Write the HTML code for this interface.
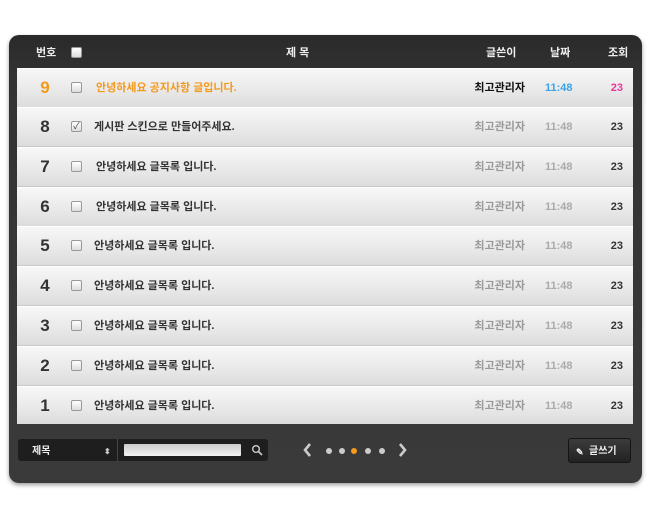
<!DOCTYPE html>
<html><head><meta charset="utf-8"><style>
*{margin:0;padding:0;box-sizing:border-box}
body{width:650px;height:507px;background:#fff;font-family:"Liberation Sans","Noto Sans CJK KR",sans-serif;position:relative;overflow:hidden}
.panel{position:absolute;left:9px;top:35px;width:633px;height:448px;border-radius:10px;background:linear-gradient(#2a2a2a,#333 10%,#3a3a3a);box-shadow:0 2px 4px rgba(0,0,0,.4)}
.hd{position:absolute;top:0;left:0;right:0;height:33px;color:#eee;font-size:11px;font-weight:bold}
.hd span{position:absolute;top:2px;height:33px;line-height:33px}
.cb{position:absolute;width:11px;height:11px;border:1px solid #999;border-radius:2px;background:linear-gradient(#fff,#ddd)}
.list{position:absolute;left:8px;top:33px;width:616px;height:356px;background:#ddd}
.row{position:absolute;left:0;width:616px;height:40px;background:linear-gradient(#f7f7f7,#e8e8e8 60%,#dcdcdc);border-bottom:1px solid #c8c8c8;border-top:1px solid #fff}
.row div{line-height:38px;top:0;height:38px}
.row .n{position:absolute;left:16px;width:24px;text-align:center;font-size:17px;font-weight:bold;color:#333}
.row .cb{left:54px;top:13px;height:11px;line-height:9px}
.row .t{position:absolute;left:79px;font-size:11px;font-weight:bold;color:#333}
.row .a{position:absolute;right:108px;font-size:11px;color:#999;font-weight:bold}
.row .d{position:absolute;left:528px;font-size:11px;color:#aaa;font-weight:bold}
.row .c{position:absolute;right:10px;font-size:11px;color:#333;font-weight:bold}
.sel{position:absolute;left:9px;top:404px;width:99px;height:22px;line-height:25px;background:#1e1e1e;border-radius:3px 0 0 3px;color:#eee;font-size:10px;font-weight:bold;padding-left:14px}
.sel2{position:absolute;left:108px;top:404px;width:151px;height:22px;background:#1e1e1e;border-left:1px solid #444;border-radius:0 3px 3px 0}
.inp{position:absolute;left:6px;top:5px;width:117px;height:12px;background:linear-gradient(#ccc,#f2f2f2);border-radius:1px}
.btn{position:absolute;left:559px;top:403px;width:63px;height:25px;line-height:26px;background:linear-gradient(#3c3c3c,#222);border-radius:3px;border:1px solid #151515;color:#eee;font-size:10px;font-weight:bold;padding-left:20px}
.dot{position:absolute;top:413px;width:6px;height:6px;border-radius:50%;background:#ccc}
</style></head><body>
<div class="panel">
 <div class="hd">
  <span style="left:27px">번호</span><div class="cb" style="left:62px;top:12px"></div>
  <span style="left:277px">제 목</span>
  <span style="left:477px">글쓴이</span>
  <span style="left:541px">날짜</span>
  <span style="left:599px">조회</span>
 </div>
 <div class="list">
  <div class="row" style="top:0"><div class="n" style="color:#f39a1e">9</div><div class="cb"></div><div class="t" style="color:#f39a1e">안녕하세요 공지사항 글입니다.</div><div class="a" style="color:#111">최고관리자</div><div class="d" style="color:#3aa3e8">11:48</div><div class="c" style="color:#e8399a">23</div></div>
  <div class="row" style="top:39px"><div class="n">8</div><div class="cb" style="font-size:9px;text-align:center;color:#444">✓</div><div class="t" style="left:77px">게시판 스킨으로 만들어주세요.</div><div class="a">최고관리자</div><div class="d">11:48</div><div class="c">23</div></div>
  <div class="row" style="top:79px"><div class="n">7</div><div class="cb"></div><div class="t">안녕하세요 글목록 입니다.</div><div class="a">최고관리자</div><div class="d">11:48</div><div class="c">23</div></div>
  <div class="row" style="top:119px"><div class="n">6</div><div class="cb"></div><div class="t">안녕하세요 글목록 입니다.</div><div class="a">최고관리자</div><div class="d">11:48</div><div class="c">23</div></div>
  <div class="row" style="top:158px"><div class="n">5</div><div class="cb"></div><div class="t" style="left:77px">안녕하세요 글목록 입니다.</div><div class="a">최고관리자</div><div class="d">11:48</div><div class="c">23</div></div>
  <div class="row" style="top:198px"><div class="n">4</div><div class="cb"></div><div class="t" style="left:77px">안녕하세요 글목록 입니다.</div><div class="a">최고관리자</div><div class="d">11:48</div><div class="c">23</div></div>
  <div class="row" style="top:238px"><div class="n">3</div><div class="cb"></div><div class="t" style="left:77px">안녕하세요 글목록 입니다.</div><div class="a">최고관리자</div><div class="d">11:48</div><div class="c">23</div></div>
  <div class="row" style="top:278px"><div class="n">2</div><div class="cb"></div><div class="t" style="left:77px">안녕하세요 글목록 입니다.</div><div class="a">최고관리자</div><div class="d">11:48</div><div class="c">23</div></div>
  <div class="row" style="top:318px;height:38px;border-bottom:none"><div class="n">1</div><div class="cb"></div><div class="t" style="left:77px">안녕하세요 글목록 입니다.</div><div class="a">최고관리자</div><div class="d">11:48</div><div class="c">23</div></div>
 </div>
 <div class="sel">제목<span style="position:absolute;left:86px;top:0;font-size:8px;color:#ccc">⬍</span></div>
 <div class="sel2"><div class="inp"></div>
  <svg style="position:absolute;left:133px;top:5px" width="12" height="12" viewBox="0 0 12 12"><circle cx="5" cy="5" r="3.3" fill="none" stroke="#ccc" stroke-width="1.4"/><path d="M7.5 7.5L11 11" stroke="#ccc" stroke-width="1.6"/></svg>
 </div>
 <svg style="position:absolute;left:293px;top:408px" width="10" height="14" viewBox="0 0 10 14"><path d="M8 1L3 7L8 13" fill="none" stroke="#ccc" stroke-width="2.6"/></svg>
 <div class="dot" style="left:317px"></div><div class="dot" style="left:330px"></div><div class="dot" style="left:342px;background:#f39a1e"></div><div class="dot" style="left:356px"></div><div class="dot" style="left:370px"></div>
 <svg style="position:absolute;left:389px;top:408px" width="10" height="14" viewBox="0 0 10 14"><path d="M2 1L7 7L2 13" fill="none" stroke="#ccc" stroke-width="2.6"/></svg>
 <div class="btn"><span style="position:absolute;left:7px;top:0;font-size:9px">✎</span>글쓰기</div>
</div>
</body></html>
